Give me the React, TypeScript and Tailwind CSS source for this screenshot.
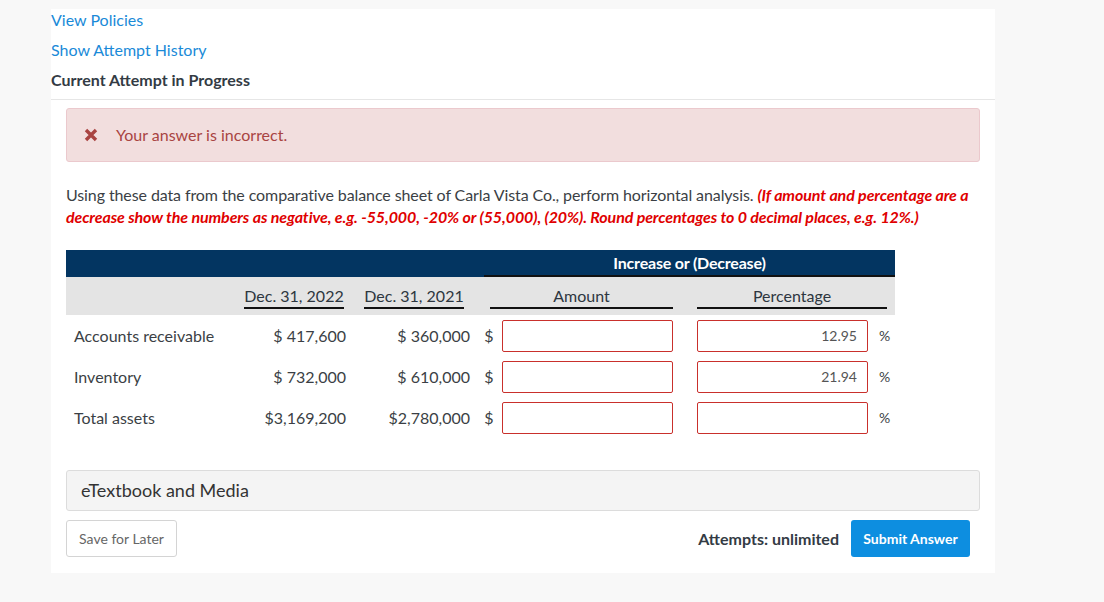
import React from "react";

const rows = [
  { label: "Accounts receivable", a: "$ 417,600", b: "$ 360,000", pct: "12.95" },
  { label: "Inventory", a: "$ 732,000", b: "$ 610,000", pct: "21.94" },
  { label: "Total assets", a: "$3,169,200", b: "$2,780,000", pct: "" },
];

export default function App() {
  return (
    <div className="min-h-[602px] w-[1104px] bg-[#f8f8f8] pt-[9px] pl-[51px] text-[#333] [font-family:Lato,'Noto_Sans',sans-serif]">
      <div className="w-[944px] bg-white pb-[16px]">
        <div className="flex flex-col gap-[8px] text-[16px] leading-[22px]">
          <a className="text-[#1a8ad8] w-fit">View Policies</a>
          <a className="text-[#1a8ad8] w-fit">Show Attempt History</a>
          <div className="font-bold text-[#333b44]">Current Attempt in Progress</div>
        </div>
        <div className="mt-[8px] border-t border-[#e6e6e6]" />
        <div className="px-[15px] pt-[8px]">
          <div className="flex h-[54px] items-center rounded-[3px] border border-[#ebc9cd] bg-[#f2dede] pl-[17px] text-[16px] text-[#a94442]">
            <svg width="14" height="14" viewBox="0 0 14 14" className="mr-[18px] shrink-0">
              <path d="M2 2 L12 12 M12 2 L2 12" stroke="#a94442" strokeWidth="3.4" strokeLinecap="butt" />
            </svg>
            <span>Your answer is incorrect.</span>
          </div>

          <p className="mt-[22px] text-[16px] leading-[22px] tracking-[-0.1px] text-[#3b3f45]">
            Using these data from the comparative balance sheet of Carla Vista Co., perform horizontal analysis.{" "}
            <span className="font-bold italic text-[#e00000]">
              (If amount and percentage are a decrease show the numbers as negative, e.g. -55,000, -20% or (55,000), (20%). Round percentages to 0 decimal places, e.g. 12%.)
            </span>
          </p>

          <div className="mt-[22px] w-[829px]">
            <div className="flex h-[27px] bg-[#033561]">
              <div className="w-[418px] shrink-0" />
              <div className="flex w-[411px] shrink-0 items-center justify-center border-b-2 border-[#111] text-[16px] font-bold tracking-[-0.2px] text-white">
                Increase or (Decrease)
              </div>
            </div>
            <div className="flex h-[38px] items-center bg-[#e4e4e4] text-[16px] text-[#2d3640]">
              <div className="w-[170px] shrink-0" />
              <div className="flex w-[116px] shrink-0 justify-center">
                <span className="border-b-2 border-[#111] leading-[22px] pt-[1px]">Dec. 31, 2022</span>
              </div>
              <div className="flex w-[124px] shrink-0 justify-center">
                <span className="border-b-2 border-[#111] leading-[22px] pt-[1px]">Dec. 31, 2021</span>
              </div>
              <div className="w-[14px] shrink-0" />
              <div className="w-[183px] shrink-0 border-b-2 border-[#111] pt-[1px] text-center leading-[22px]">Amount</div>
              <div className="w-[24px] shrink-0" />
              <div className="w-[190px] shrink-0 border-b-2 border-[#111] pt-[1px] text-center leading-[22px]">Percentage</div>
            </div>
            {rows.map((r) => (
              <div key={r.label} className="flex h-[41px] items-center text-[16px] text-[#3b3f45]">
                <div className="w-[170px] shrink-0 pl-[8px]">{r.label}</div>
                <div className="w-[116px] shrink-0 pr-[6px] text-right">{r.a}</div>
                <div className="w-[124px] shrink-0 pr-[6px] text-right">{r.b}</div>
                <div className="w-[26px] shrink-0 text-center">$</div>
                <div className="h-[32px] w-[171px] shrink-0 rounded-[2px] border border-[#c9302c] bg-white" />
                <div className="w-[24px] shrink-0" />
                <div className="flex h-[32px] w-[171px] shrink-0 items-center justify-end rounded-[2px] border border-[#c9302c] bg-white pr-[10px] text-[14px] text-[#555]">
                  {r.pct}
                </div>
                <div className="w-[27px] shrink-0 pl-[11px] text-[14px]">%</div>
              </div>
            ))}
          </div>

          <div className="mt-[32px] flex h-[41px] items-center rounded-[3px] border border-[#dcdcdc] bg-[#f4f4f4] pl-[14px] text-[18px] text-[#333]">
            eTextbook and Media
          </div>

          <div className="mt-[9px] flex items-center justify-between">
            <button className="h-[37px] w-[111px] rounded-[3px] border border-[#d4d4d4] bg-white text-[14px] text-[#666]">
              Save for Later
            </button>
            <div className="mr-[10px] flex items-center">
              <span className="mr-[12px] text-[16px] font-bold text-[#333b44]">Attempts: unlimited</span>
              <button className="h-[37px] w-[119px] rounded-[3px] bg-[#0d8ee0] text-[14px] font-bold text-white">
                Submit Answer
              </button>
            </div>
          </div>
        </div>
      </div>
    </div>
  );
}
